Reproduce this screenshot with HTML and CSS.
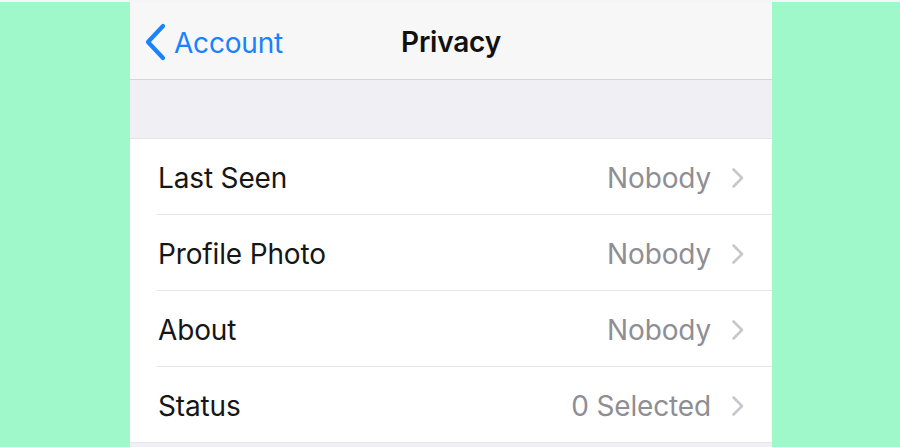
FILE: index.html
```html
<!DOCTYPE html>
<html lang="en">
<head>
<meta charset="utf-8">
<title>Privacy</title>
<link rel="stylesheet" href="styles.css">
</head>
<body>
<div class="topstrip"></div>
<div class="stage">
  <div class="panel">
    <header class="navbar">
      <a class="back">
        <svg class="back-icon" width="24" height="38" viewBox="0 0 24 38"><path d="M20 3 L5 19 L20 35" fill="none" stroke="#1a82fb" stroke-width="4.2" stroke-linecap="round" stroke-linejoin="round"/></svg>
        <span class="back-label">Account</span>
      </a>
      <h1 class="title">Privacy</h1>
    </header>
    <div class="section-gap"></div>
    <ul class="list">
      <li class="row"><div class="row-inner"><span class="label">Last Seen</span><span class="value">Nobody</span><svg class="chev" width="14" height="22" viewBox="0 0 14 22"><path d="M2.5 2.5 L11 11 L2.5 19.5" fill="none" stroke="#c7c7cc" stroke-width="2.6" stroke-linecap="round" stroke-linejoin="round"/></svg></div></li>
      <li class="row"><div class="row-inner"><span class="label">Profile Photo</span><span class="value">Nobody</span><svg class="chev" width="14" height="22" viewBox="0 0 14 22"><path d="M2.5 2.5 L11 11 L2.5 19.5" fill="none" stroke="#c7c7cc" stroke-width="2.6" stroke-linecap="round" stroke-linejoin="round"/></svg></div></li>
      <li class="row"><div class="row-inner"><span class="label">About</span><span class="value">Nobody</span><svg class="chev" width="14" height="22" viewBox="0 0 14 22"><path d="M2.5 2.5 L11 11 L2.5 19.5" fill="none" stroke="#c7c7cc" stroke-width="2.6" stroke-linecap="round" stroke-linejoin="round"/></svg></div></li>
      <li class="row last"><div class="row-inner"><span class="label">Status</span><span class="value">0 Selected</span><svg class="chev" width="14" height="22" viewBox="0 0 14 22"><path d="M2.5 2.5 L11 11 L2.5 19.5" fill="none" stroke="#c7c7cc" stroke-width="2.6" stroke-linecap="round" stroke-linejoin="round"/></svg></div></li>
    </ul>
    <div class="bottom-gap"></div>
  </div>
</div>
</body>
</html>
```
FILE: styles.css
```css
html, body {
  margin: 0;
  padding: 0;
}
body {
  width: 900px;
  height: 447px;
  overflow: hidden;
  background: #9ef8ca;
  font-family: "Inter", "Liberation Sans", sans-serif;
  -webkit-font-smoothing: antialiased;
}
.topstrip {
  height: 2px;
  background: #f4f6f5;
}
.stage {
  padding-left: 130px;
}
.panel {
  width: 642px;
  background: #ffffff;
}
.navbar {
  height: 77px;
  background: #f7f7f7;
  border-bottom: 1px solid #d6d6da;
  display: flex;
  align-items: center;
  justify-content: center;
  position: relative;
}
.back {
  position: absolute;
  left: 13px;
  top: 20px;
  display: flex;
  align-items: center;
  gap: 7px;
  color: #1a82fb;
  text-decoration: none;
}
.back-icon {
  display: block;
}
.back-label {
  font-size: 28px;
  letter-spacing: -0.2px;
  line-height: 38px;
  padding-top: 2px;
}
.title {
  margin: 0;
  font-size: 28px;
  font-weight: 600;
  color: #111111;
  letter-spacing: -0.2px;
  padding-top: 2px;
}
.section-gap {
  height: 58px;
  background: #efeff4;
  border-bottom: 1px solid #e3e3e8;
}
.list {
  list-style: none;
  margin: 0;
  padding: 0;
}
.row {
  padding-left: 27px;
  background: #ffffff;
}
.row-inner {
  border-bottom: 1px solid #e6e6ea;
  display: flex;
  align-items: center;
  padding-right: 27px;
  padding-top: 2px;
  box-sizing: border-box;
  height: 76px;
}
.row.last .row-inner {
  border-bottom: none;
  height: 75px;
}
.label {
  flex: 1;
  font-size: 28px;
  color: #161616;
  padding-left: 1px;
  letter-spacing: -0.15px;
}
.value {
  font-size: 28px;
  color: #8e8e93;
  margin-right: 20px;
  letter-spacing: -0.15px;
}
.chev {
  display: block;
}
.bottom-gap {
  height: 5px;
  background: #efeff4;
  border-top: 1px solid #e6e6ea;
}
```
